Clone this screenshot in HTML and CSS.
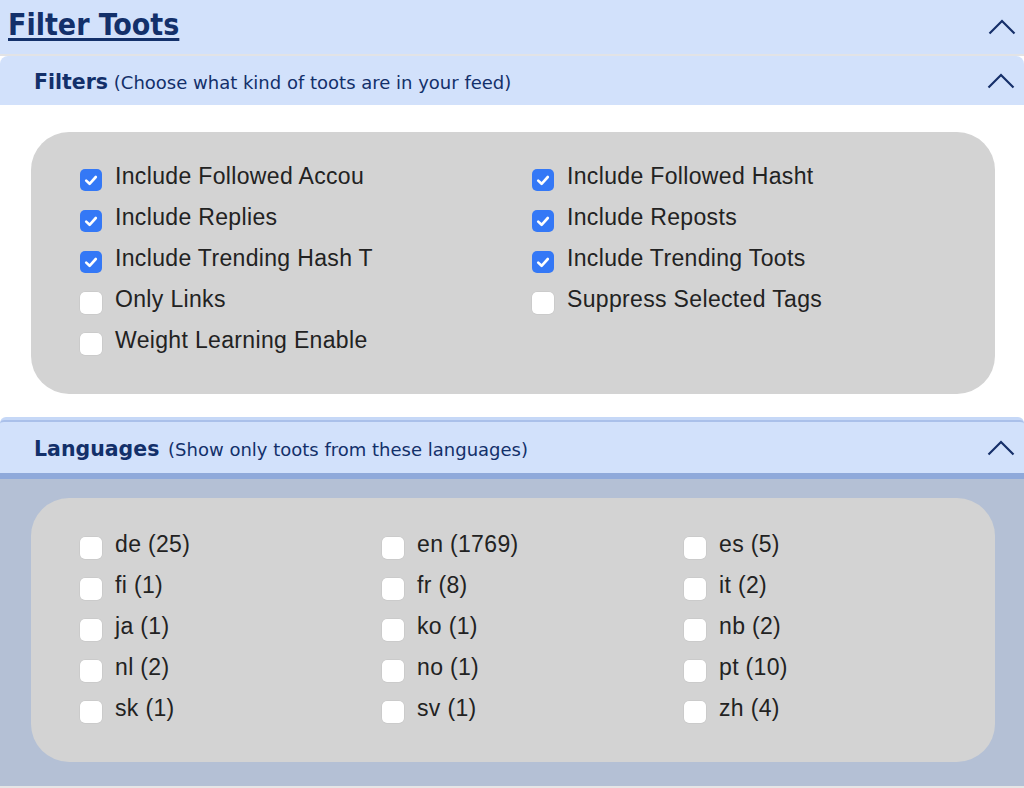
FILE: index.html
```html
<!DOCTYPE html>
<html lang="en">
<head>
<meta charset="utf-8">
<title>Filter Toots</title>
<link rel="stylesheet" href="styles.css">
</head>
<body>
<div class="panel">
  <div class="panel-head">
    <h1 class="title">Filter Toots</h1>
    <svg class="chev" width="28" height="16" viewBox="0 0 28 16"><polyline points="1.5,14.5 14,2 26.5,14.5" fill="none" stroke="#17306a" stroke-width="2.2"/></svg>
  </div>

  <div class="acc-item filters">
    <div class="acc-head">
      <span class="acc-title"><b>Filters</b> (Choose what kind of toots are in your feed)</span>
      <svg class="chev" width="28" height="16" viewBox="0 0 28 16"><polyline points="1.5,14.5 14,2 26.5,14.5" fill="none" stroke="#17306a" stroke-width="2.2"/></svg>
    </div>
    <div class="acc-body body-white">
      <div class="box box-filters">
        <label class="opt"><span class="cb on"><svg width="22" height="22" viewBox="0 0 22 22"><path d="M6.2 11.6 L9.6 14.8 L15.8 8" fill="none" stroke="#fff" stroke-width="2.6" stroke-linecap="round" stroke-linejoin="round"/></svg></span>Include Followed Accou</label>
        <label class="opt"><span class="cb on"><svg width="22" height="22" viewBox="0 0 22 22"><path d="M6.2 11.6 L9.6 14.8 L15.8 8" fill="none" stroke="#fff" stroke-width="2.6" stroke-linecap="round" stroke-linejoin="round"/></svg></span>Include Followed Hasht</label>
        <label class="opt"><span class="cb on"><svg width="22" height="22" viewBox="0 0 22 22"><path d="M6.2 11.6 L9.6 14.8 L15.8 8" fill="none" stroke="#fff" stroke-width="2.6" stroke-linecap="round" stroke-linejoin="round"/></svg></span>Include Replies</label>
        <label class="opt"><span class="cb on"><svg width="22" height="22" viewBox="0 0 22 22"><path d="M6.2 11.6 L9.6 14.8 L15.8 8" fill="none" stroke="#fff" stroke-width="2.6" stroke-linecap="round" stroke-linejoin="round"/></svg></span>Include Reposts</label>
        <label class="opt"><span class="cb on"><svg width="22" height="22" viewBox="0 0 22 22"><path d="M6.2 11.6 L9.6 14.8 L15.8 8" fill="none" stroke="#fff" stroke-width="2.6" stroke-linecap="round" stroke-linejoin="round"/></svg></span>Include Trending Hash T</label>
        <label class="opt"><span class="cb on"><svg width="22" height="22" viewBox="0 0 22 22"><path d="M6.2 11.6 L9.6 14.8 L15.8 8" fill="none" stroke="#fff" stroke-width="2.6" stroke-linecap="round" stroke-linejoin="round"/></svg></span>Include Trending Toots</label>
        <label class="opt"><span class="cb"></span>Only Links</label>
        <label class="opt"><span class="cb"></span>Suppress Selected Tags</label>
        <label class="opt"><span class="cb"></span>Weight Learning Enable</label>
      </div>
    </div>
  </div>

  <div class="acc-item languages">
    <div class="acc-head">
      <span class="acc-title"><b>Languages</b> (Show only toots from these languages)</span>
      <svg class="chev" width="28" height="16" viewBox="0 0 28 16"><polyline points="1.5,14.5 14,2 26.5,14.5" fill="none" stroke="#17306a" stroke-width="2.2"/></svg>
    </div>
    <div class="acc-body body-blue">
      <div class="box box-langs">
        <label class="opt"><span class="cb"></span>de (25)</label>
        <label class="opt"><span class="cb"></span>en (1769)</label>
        <label class="opt"><span class="cb"></span>es (5)</label>
        <label class="opt"><span class="cb"></span>fi (1)</label>
        <label class="opt"><span class="cb"></span>fr (8)</label>
        <label class="opt"><span class="cb"></span>it (2)</label>
        <label class="opt"><span class="cb"></span>ja (1)</label>
        <label class="opt"><span class="cb"></span>ko (1)</label>
        <label class="opt"><span class="cb"></span>nb (2)</label>
        <label class="opt"><span class="cb"></span>nl (2)</label>
        <label class="opt"><span class="cb"></span>no (1)</label>
        <label class="opt"><span class="cb"></span>pt (10)</label>
        <label class="opt"><span class="cb"></span>sk (1)</label>
        <label class="opt"><span class="cb"></span>sv (1)</label>
        <label class="opt"><span class="cb"></span>zh (4)</label>
      </div>
    </div>
  </div>
  <div class="foot"></div>
</div>
</body>
</html>
```

FILE: styles.css
```css
html, body {
  margin: 0;
  padding: 0;
  background: #ffffff;
}

.panel {
  width: 1024px;
  height: 788px;
  overflow: hidden;
}

.panel-head {
  height: 54px;
  background: #d2e1fb;
  border-bottom: 2px solid #e2e3e6;
  display: flex;
  align-items: center;
  justify-content: space-between;
  padding: 0 8px 0 8px;
  box-sizing: content-box;
}

.title {
  margin: 0;
  font-family: "DejaVu Sans Condensed", "DejaVu Sans", sans-serif;
  font-weight: bold;
  font-size: 30px;
  color: #13306a;
  text-decoration: underline;
  text-decoration-thickness: 3px;
  text-underline-offset: 3px;
  position: relative;
  top: -3px;
}

.acc-head {
  display: flex;
  align-items: center;
  justify-content: space-between;
  background: #d2e1fb;
  padding: 0 9px 0 34px;
  border-radius: 8px 8px 0 0;
}

.filters .acc-head {
  height: 49px;
}

.languages {
  border-top: 3px solid #c6d8f7;
  border-radius: 6px 6px 0 0;
}

.languages .acc-head {
  height: 51px;
  border-top: 2px solid #aac0ea;
  border-bottom: 6px solid #8fa9da;
  border-radius: 4px 4px 0 0;
}

.acc-title {
  font-family: "DejaVu Sans", sans-serif;
  font-size: 18px;
  color: #13306a;
}

.acc-title b {
  font-size: 20.5px;
  margin-right: 3px;
}

.filters .acc-title b {
  margin-right: 0;
}

.filters .acc-title { position: relative; top: 1px; }
.languages .acc-title { position: relative; top: 1px; }

.body-white {
  background: #ffffff;
  padding: 27px 29px 23px 31px;
}

.body-blue {
  background: #b4c0d5;
  padding: 19px 29px 24px 31px;
}

.box {
  background: #d3d3d3;
  border-radius: 38px;
  display: grid;
  grid-auto-rows: 41px;
  padding-left: 49px;
}

.box-filters {
  grid-template-columns: 452px 452px;
  padding-top: 23px;
  padding-bottom: 34px;
}

.box-langs {
  grid-template-columns: 302px 302px 302px;
  padding-top: 25px;
  padding-bottom: 34px;
}

.opt {
  display: flex;
  align-items: flex-start;
  font-family: "Liberation Sans", Arial, sans-serif;
  font-size: 23px;
  letter-spacing: 0.34px;
  line-height: 43px;
  height: 41px;
  color: #222222;
  white-space: nowrap;
}

.cb {
  flex: none;
  width: 22px;
  height: 22px;
  margin-top: 14px;
  margin-right: 13px;
  border-radius: 5px;
  background: #ffffff;
  box-shadow: 0 0 0 0.5px #c4c4c4;
}

.cb.on {
  background: #3478f6;
  box-shadow: none;
}

.cb svg {
  display: block;
}

.foot {
  height: 2px;
  background: #e6e6e6;
}
```
